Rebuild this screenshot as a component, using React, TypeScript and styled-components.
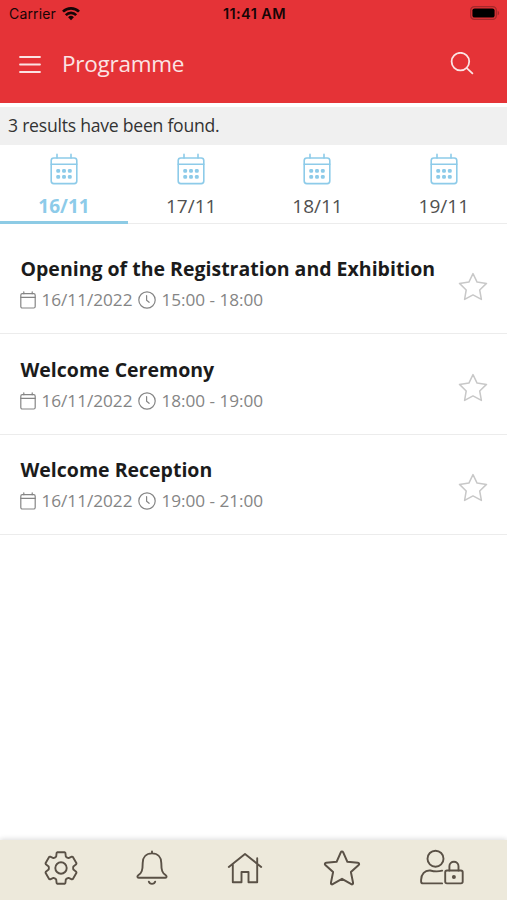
import React from "react";
import styled, { createGlobalStyle } from "styled-components";

const GlobalStyle = createGlobalStyle`
  * { box-sizing: border-box; }
  body { margin: 0; background: #fff; }
`;

const Screen = styled.main`
  width: 507px;
  height: 900px;
  display: flex;
  flex-direction: column;
  overflow: hidden;
  background: #fff;
  font-family: "Open Sans", "Noto Sans", sans-serif;
  svg { display: block; flex: none; }
`;

const StatusBar = styled.div`
  height: 27px;
  flex: none;
  display: grid;
  grid-template-columns: 1fr auto 1fr;
  align-items: center;
  padding: 0 7px 0 9px;
  background: #e53337;
  color: #160506;
  font-family: Inter, "Liberation Sans", sans-serif;
  font-size: 14px;
  line-height: 27px;
`;

const Carrier = styled.div`
  display: flex;
  align-items: center;
  gap: 6px;
  letter-spacing: 0.15px;
`;

const Clock = styled.div`
  font-size: 14.5px;
  font-weight: 600;
  letter-spacing: 0.4px;
`;

const Battery = styled.div`
  justify-self: end;
`;

const Header = styled.header`
  height: 76px;
  flex: none;
  display: flex;
  align-items: center;
  padding: 0 33px 2px 19px;
  background: #e53337;
  color: #fbe4e4;
`;

const PageTitle = styled.h1`
  margin: 0 auto 0 21px;
  font-size: 22.5px;
  line-height: 30px;
  font-weight: 400;
  letter-spacing: -0.25px;
`;

const Results = styled.div`
  height: 38px;
  flex: none;
  margin-top: 4px;
  padding-left: 8px;
  background: #f0f0f0;
  color: #333;
  font-size: 17.6px;
  line-height: 37px;
  letter-spacing: -0.24px;
`;

const Tabs = styled.nav`
  height: 79px;
  flex: none;
  display: grid;
  grid-template-columns: 128px repeat(3, 1fr);
  border-bottom: 1px solid #ececec;
`;

const Tab = styled.div<{ $active?: boolean }>`
  display: flex;
  flex-direction: column;
  align-items: center;
  padding-top: 8px;
  height: 79px;
  border-bottom: ${(p) => (p.$active ? "3px solid #8dcbe5" : "0")};
  color: ${(p) => (p.$active ? "#8dcbe9" : "#505050")};
  font-weight: ${(p) => (p.$active ? 700 : 400)};
  font-size: 19px;
  svg { color: #8dcbe9; }
`;

const TabLabel = styled.span`
  margin-top: 8px;
  line-height: 26px;
`;

const List = styled.section`
  flex: 1;
  padding-top: 9.5px;
`;

const Row = styled.article`
  height: 100.6px;
  display: flex;
  align-items: center;
  justify-content: space-between;
  padding: 8px 19px 0 20px;
  border-bottom: 1px solid #ececec;
`;

const RowText = styled.div`
  padding-bottom: 5px;
`;

const RowTitle = styled.h2`
  margin: 0 0 0 0.5px;
  color: #1b1b1b;
  font-size: 19.5px;
  line-height: 28px;
  font-weight: 700;
  white-space: nowrap;
`;

const Meta = styled.div`
  display: flex;
  align-items: center;
  margin-top: 3px;
  color: #858585;
  font-size: 17.2px;
  line-height: 28px;
  letter-spacing: -0.03px;
`;

const MetaText = styled.span`
  margin: 0 5.5px 0 5.5px;
`;

const Footer = styled.footer`
  height: 60px;
  flex: none;
  display: grid;
  grid-template-columns: 106px 76px 110px 84px 1fr;
  align-items: center;
  padding: 0 7px 5px 8px;
  justify-items: center;
  background: #ede9db;
  color: #5a5146;
  box-shadow: 0 -1px 5px rgba(0, 0, 0, 0.14);
`;

const line = {
  fill: "none",
  stroke: "currentColor",
  strokeLinecap: "round" as const,
  strokeLinejoin: "round" as const,
};

const WifiIcon = () => (
  <svg width="18" height="14" viewBox="0 0 18 14" fill="none" stroke="currentColor" strokeWidth="2.7">
    <path d="M1 4.6a11.5 11.5 0 0 1 16 0M3.8 8.1a7.4 7.4 0 0 1 10.4 0" />
    <path d="M9 13.2 6.1 10.3a4.1 4.1 0 0 1 5.8 0Z" fill="currentColor" stroke="none" />
  </svg>
);

const BatteryIcon = () => (
  <svg width="30" height="15" viewBox="0 0 30 15">
    <rect x=".7" y=".7" width="25.6" height="12.6" rx="3.6" fill="none" stroke="#a5282b" strokeWidth="1.3" />
    <rect x="2.4" y="2.4" width="22.2" height="9.2" rx="2.2" fill="#000" />
    <path d="M27.6 4.7c2 .7 2 3.9 0 4.6z" fill="#a5282b" />
  </svg>
);

const MenuIcon = () => (
  <svg width="22" height="18" viewBox="0 0 22 18" {...line} strokeWidth="1.8">
    <path d="M1 2h20M1 9.5h20M1 17h20" />
  </svg>
);

const SearchIcon = () => (
  <svg width="24" height="24" viewBox="0 0 24 24" {...line} strokeWidth="1.8">
    <circle cx="10.4" cy="9.6" r="8.8" />
    <path d="m16.8 16.2 5.6 5.2" />
  </svg>
);

const CalendarIcon = () => (
  <svg width="28" height="32" viewBox="0 0 28 32" {...line} strokeWidth="1.6">
    <rect x="1.2" y="5" width="25.6" height="25.6" rx="2.6" />
    <path d="M1.2 11.2h25.6M7 1.4V5M21 1.4V5" />
    <g fill="currentColor" stroke="none">
      {[17.8, 23.8].map((y) => [8.2, 14, 19.8].map((x) => <rect key={`${x}-${y}`} x={x - 1.9} y={y - 1.9} width="3.8" height="3.8" rx="1.3" />))}
    </g>
  </svg>
);

const DateIcon = () => (
  <svg width="16" height="18" viewBox="0 0 16 18" {...line} strokeWidth="1.2">
    <rect x=".8" y="2.7" width="14.4" height="14.3" rx="1.5" />
    <path d="M.8 6.3h14.4M3.8.8v1.9M12.2.8v1.9" />
  </svg>
);

const ClockIcon = () => (
  <svg width="18" height="18" viewBox="0 0 18 18" {...line} strokeWidth="1.2">
    <circle cx="9" cy="9" r="8.2" />
    <path d="M8.6 4.7v4.6l2.5 2" />
  </svg>
);

const FavouriteIcon = () => (
  <svg width="30" height="30" viewBox="0 0 30 30" {...line} stroke="#c8c8c8" strokeWidth="1.5">
    <path d="m15 1.6 4.1 8.5 9.4 1.3-6.8 6.6 1.7 9.4-8.4-4.5-8.4 4.5 1.6-9.4-6.7-6.6 9.4-1.3Z" />
  </svg>
);

const GearIcon = () => {
  const tooth: [number, number][] = [[-5.9, -10.6], [-4.8, -11.5], [-4.4, -15], [-3.6, -15.8], [3.6, -15.8], [4.4, -15], [4.8, -11.5], [5.9, -10.6]];
  const points = Array.from({ length: 6 }, (_, i) => {
    const a = (i * Math.PI) / 3;
    return tooth.map(([x, y]) => `${(x * Math.cos(a) - y * Math.sin(a)).toFixed(2)},${(x * Math.sin(a) + y * Math.cos(a)).toFixed(2)}`);
  }).flat();
  return (
    <svg width="36" height="36" viewBox="-18 -18 36 36" {...line} strokeWidth="1.9">
      <polygon points={points.join(" ")} />
      <circle r="5.7" />
    </svg>
  );
};

const BellIcon = () => (
  <svg width="32" height="36" viewBox="0 0 32 36" {...line} strokeWidth="1.9">
    <path d="M16 1.4v2M16 3.4c-6 0-9.3 4.1-9.3 9.5 0 7.6-1 9.9-4.2 12.1-1.5 1.1-1.5 2.8.2 2.8h26.6c1.7 0 1.7-1.7.2-2.8-3.2-2.2-4.2-4.5-4.2-12.1 0-5.4-3.3-9.5-9.3-9.5Z" />
    <path d="M12.8 31.6c.8 3 5.6 3 6.4 0" />
  </svg>
);

const HomeIcon = () => (
  <svg width="36" height="36" viewBox="0 0 36 36" {...line} strokeWidth="1.9">
    <path d="M1.8 17 18 3.9 34.2 17M5.8 14v18.2h8.7V22h7v10.2h8.7V8.3" />
  </svg>
);

const StarIcon = () => (
  <svg width="38" height="38" viewBox="0 0 38 38" {...line} strokeWidth="2">
    <path d="M17.9 3.2c.4-.9 1.7-.9 2.2 0l4.3 9.6 10.5 1c1.2.1 1.7 1.3.8 2.1l-7.8 7.2 2.2 10.8c.2 1-.9 1.8-1.8 1.3L19 29.8l-9.3 5.4c-.9.5-2-.3-1.8-1.3l2.2-10.8-7.8-7.2c-.9-.8-.4-2 .8-2.1l10.5-1Z" />
  </svg>
);

const UserLockIcon = () => (
  <svg width="45" height="37" viewBox="0 0 45 37" {...line} strokeWidth="1.9">
    <circle cx="15.5" cy="9.7" r="8" />
    <path d="M22.2 21.7c-4.6 1.2-8.2.8-12-.2-5.3-.5-9.1 3.7-9.1 9.5v1.4c0 1.2.8 2 2 2h19" />
    <rect x="25.2" y="21.5" width="17.5" height="12.9" rx="1.8" />
    <path d="M29.4 21.5v-4.2c0-6.1 9.1-6.1 9.1 0v4.2" />
    <circle cx="33.9" cy="27.9" r="2" fill="currentColor" stroke="none" />
  </svg>
);

const days = ["16/11", "17/11", "18/11", "19/11"];
const events = [
  { title: "Opening of the Registration and Exhibition", time: "15:00 - 18:00" },
  { title: "Welcome Ceremony", time: "18:00 - 19:00" },
  { title: "Welcome Reception", time: "19:00 - 21:00" },
];

export default function App() {
  return (
    <Screen>
      <GlobalStyle />
      <StatusBar>
        <Carrier>Carrier <WifiIcon /></Carrier>
        <Clock>11:41 AM</Clock>
        <Battery><BatteryIcon /></Battery>
      </StatusBar>
      <Header>
        <MenuIcon />
        <PageTitle>Programme</PageTitle>
        <SearchIcon />
      </Header>
      <Results>3 results have been found.</Results>
      <Tabs>
        {days.map((day, i) => (
          <Tab key={day} $active={i === 0}>
            <CalendarIcon />
            <TabLabel>{day}</TabLabel>
          </Tab>
        ))}
      </Tabs>
      <List>
        {events.map((event) => (
          <Row key={event.title}>
            <RowText>
              <RowTitle>{event.title}</RowTitle>
              <Meta>
                <DateIcon />
                <MetaText>16/11/2022</MetaText>
                <ClockIcon />
                <MetaText>{event.time}</MetaText>
              </Meta>
            </RowText>
            <FavouriteIcon />
          </Row>
        ))}
      </List>
      <Footer>
        <GearIcon />
        <BellIcon />
        <HomeIcon />
        <StarIcon />
        <UserLockIcon />
      </Footer>
    </Screen>
  );
}
